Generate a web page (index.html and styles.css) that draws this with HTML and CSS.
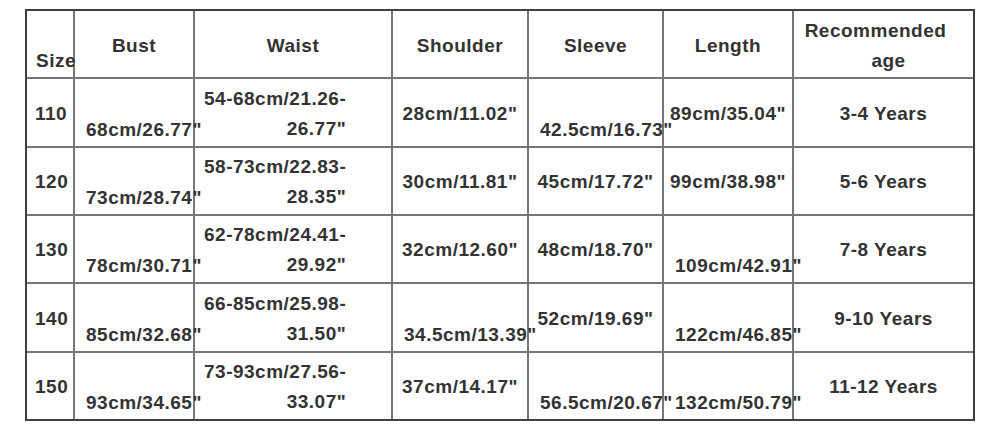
FILE: index.html
```html
<!DOCTYPE html>
<html lang="en">
<head>
<meta charset="utf-8">
<title>Size chart</title>
<link rel="stylesheet" href="styles.css">
</head>
<body>
<table class="chart">
  <colgroup>
    <col class="c1"><col class="c2"><col class="c3"><col class="c4"><col class="c5"><col class="c6"><col class="c7">
  </colgroup>
  <thead>
    <tr>
      <th class="size-h">Size</th>
      <th>Bust</th>
      <th>Waist</th>
      <th>Shoulder</th>
      <th>Sleeve</th>
      <th>Length</th>
      <th><span class="age-1">Recommended</span><br><span class="age-2">age</span></th>
    </tr>
  </thead>
  <tbody>
    <tr>
      <td class="size">110</td>
      <td class="low">68cm/26.77"</td>
      <td class="waist"><span class="wrap">54-68cm/21.26-<br>26.77"</span></td>
      <td>28cm/11.02"</td>
      <td class="low">42.5cm/16.73"</td>
      <td>89cm/35.04"</td>
      <td>3-4 Years</td>
    </tr>
    <tr>
      <td class="size">120</td>
      <td class="low">73cm/28.74"</td>
      <td class="waist"><span class="wrap">58-73cm/22.83-<br>28.35"</span></td>
      <td>30cm/11.81"</td>
      <td>45cm/17.72"</td>
      <td>99cm/38.98"</td>
      <td>5-6 Years</td>
    </tr>
    <tr>
      <td class="size">130</td>
      <td class="low">78cm/30.71"</td>
      <td class="waist"><span class="wrap">62-78cm/24.41-<br>29.92"</span></td>
      <td>32cm/12.60"</td>
      <td>48cm/18.70"</td>
      <td class="low">109cm/42.91"</td>
      <td>7-8 Years</td>
    </tr>
    <tr>
      <td class="size">140</td>
      <td class="low">85cm/32.68"</td>
      <td class="waist"><span class="wrap">66-85cm/25.98-<br>31.50"</span></td>
      <td class="low">34.5cm/13.39"</td>
      <td>52cm/19.69"</td>
      <td class="low">122cm/46.85"</td>
      <td>9-10 Years</td>
    </tr>
    <tr>
      <td class="size">150</td>
      <td class="low">93cm/34.65"</td>
      <td class="waist"><span class="wrap">73-93cm/27.56-<br>33.07"</span></td>
      <td>37cm/14.17"</td>
      <td class="low">56.5cm/20.67"</td>
      <td class="low">132cm/50.79"</td>
      <td>11-12 Years</td>
    </tr>
  </tbody>
</table>
</body>
</html>
```
FILE: styles.css
```css
html, body {
  margin: 0;
  padding: 0;
  background: #fff;
}

body {
  padding: 9px 0 0 25px;
}

.chart {
  box-sizing: border-box;
  width: 950px;
  table-layout: fixed;
  border-collapse: separate;
  border-spacing: 0;
  border: 2px solid #404040;
  background: #fff;
  font-family: "Liberation Sans", Arial, sans-serif;
  font-weight: 700;
  font-size: 19px;
  letter-spacing: 0.5px;
  color: #333;
}

.c1 { width: 48px; }
.c2 { width: 120px; }
.c3 { width: 198px; }
.c4 { width: 136px; }
.c5 { width: 135px; }
.c6 { width: 130px; }
.c7 { width: 179px; }

.chart th,
.chart td {
  padding: 2px 0 0;
  border-right: 2px solid #777;
  border-bottom: 2px solid #777;
  text-align: center;
  vertical-align: middle;
  white-space: nowrap;
  line-height: 30px;
  font-weight: 700;
}

.chart tr > :last-child {
  border-right: 0;
}

.chart tbody tr:last-child > * {
  border-bottom: 0;
}

.chart thead tr { height: 68px; }
.chart tbody tr { height: 68px; }
.chart tbody tr:nth-child(1),
.chart tbody tr:nth-child(4) { height: 69px; }
.chart tbody tr:last-child { height: 66px; }

.chart thead th {
  padding-top: 3px;
}

.chart .size-h {
  text-align: left;
  padding-left: 9px;
  padding-top: 33px;
}

.chart .size {
  text-align: left;
  padding-left: 8px;
}

.chart .low {
  text-align: left;
  padding-left: 11px;
  padding-top: 34px;
}

.chart .waist {
  text-align: left;
  padding-left: 9px;
}

.wrap {
  display: inline-block;
  text-align: right;
}

.age-1 {
  display: inline-block;
  margin-right: 16px;
}

.age-2 {
  display: inline-block;
  margin-left: 10px;
}
```
